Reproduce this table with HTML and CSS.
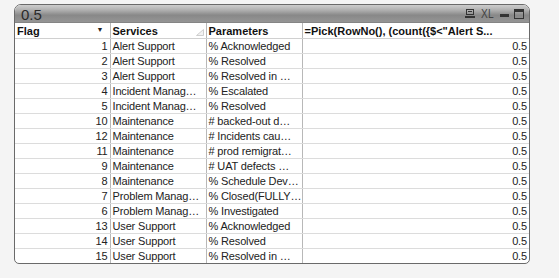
FILE: index.html
```html
<!DOCTYPE html>
<html>
<head>
<meta charset="utf-8">
<link rel="stylesheet" href="styles.css">
</head>
<body>
<div class="frame">
  <div class="titlebar">
    <span class="title">0.5</span>
    <div class="tools">
      <svg class="ico" width="10" height="9" viewBox="0 0 10 9"><rect x="1.5" y="0.5" width="7" height="5" fill="none" stroke="#333"/><rect x="3" y="2" width="4" height="1" fill="#333"/><rect x="0" y="7" width="10" height="2" fill="#333"/></svg>
      <span class="xl">XL</span>
      <svg class="ico" width="9" height="9" viewBox="0 0 9 9"><rect x="0" y="5" width="9" height="3" fill="#333"/></svg>
      <svg class="ico" width="10" height="10" viewBox="0 0 10 10"><rect x="0.5" y="0.5" width="9" height="9" fill="none" stroke="#333"/><rect x="0" y="0" width="10" height="3" fill="#333"/></svg>
    </div>
  </div>
  <table class="grid">
    <colgroup><col class="c1"><col class="c2"><col class="c3"><col class="c4"></colgroup>
    <thead>
      <tr>
        <th><span class="hd">Flag</span><span class="dd">▼</span></th>
        <th><span class="hd">Services</span><svg class="sort" width="8" height="7" viewBox="0 0 8 7"><path d="M0.5 6.5 L7.5 6.5 L7.5 0.5 Z" fill="#f2f2f2" stroke="#cfcfcf"/></svg></th>
        <th><span class="hd">Parameters</span></th>
        <th><span class="hd">=Pick(RowNo(), (count({$&lt;"Alert S...</span></th>
      </tr>
    </thead>
    <tbody>
      <tr><td class="num">1</td><td>Alert Support</td><td>% Acknowledged</td><td class="num">0.5</td></tr>
      <tr><td class="num">2</td><td>Alert Support</td><td>% Resolved</td><td class="num">0.5</td></tr>
      <tr><td class="num">3</td><td>Alert Support</td><td>% Resolved in …</td><td class="num">0.5</td></tr>
      <tr><td class="num">4</td><td>Incident Manag…</td><td>% Escalated</td><td class="num">0.5</td></tr>
      <tr><td class="num">5</td><td>Incident Manag…</td><td>% Resolved</td><td class="num">0.5</td></tr>
      <tr><td class="num">10</td><td>Maintenance</td><td># backed-out d…</td><td class="num">0.5</td></tr>
      <tr><td class="num">12</td><td>Maintenance</td><td># Incidents cau…</td><td class="num">0.5</td></tr>
      <tr><td class="num">11</td><td>Maintenance</td><td># prod remigrat…</td><td class="num">0.5</td></tr>
      <tr><td class="num">9</td><td>Maintenance</td><td># UAT defects …</td><td class="num">0.5</td></tr>
      <tr><td class="num">8</td><td>Maintenance</td><td>% Schedule Dev…</td><td class="num">0.5</td></tr>
      <tr><td class="num">7</td><td>Problem Manag…</td><td>% Closed(FULLY…</td><td class="num">0.5</td></tr>
      <tr><td class="num">6</td><td>Problem Manag…</td><td>% Investigated</td><td class="num">0.5</td></tr>
      <tr><td class="num">13</td><td>User Support</td><td>% Acknowledged</td><td class="num">0.5</td></tr>
      <tr><td class="num">14</td><td>User Support</td><td>% Resolved</td><td class="num">0.5</td></tr>
      <tr><td class="num">15</td><td>User Support</td><td>% Resolved in …</td><td class="num">0.5</td></tr>
    </tbody>
  </table>
</div>
</body>
</html>
```
FILE: styles.css
```css
html, body {
  margin: 0;
  padding: 0;
  background: #f4f4f4;
}
body {
  padding: 4px 0 0 14px;
  font-family: "Liberation Sans", "DejaVu Sans", sans-serif;
  font-size: 11px;
  color: #222;
}
.frame {
  width: 514px;
  border: 1px solid #6a6a6a;
  border-radius: 7px 7px 5px 5px;
  background: #fff;
  overflow: hidden;
}
.titlebar {
  height: 17px;
  display: flex;
  align-items: center;
  justify-content: space-between;
  padding: 0 5px 0 6px;
  background: linear-gradient(to bottom, #cdcdcd 0%, #b0b0b0 30%, #888888 60%, #959595 100%);
  border-bottom: 1px solid #858585;
}
.title {
  font-size: 15px;
  color: #2a2a2a;
  line-height: 17px;
  padding-top: 1px;
}
.tools {
  display: flex;
  align-items: center;
  gap: 5px;
}
.xl {
  font-size: 12px;
  color: #444;
  line-height: 12px;
  transform: scaleX(0.85);
}
.grid {
  width: 514px;
  border-collapse: collapse;
  table-layout: fixed;
}
.c1 { width: 95px; }
.c2 { width: 96px; }
.c3 { width: 96px; }
.c4 { width: 227px; }
th, td {
  height: 14px;
  padding: 0 1px 0 2px;
  line-height: 14px;
  white-space: nowrap;
  overflow: hidden;
  text-align: left;
  border-bottom: 1px solid #dcdcdc;
  border-left: 1px solid #b8b8b8;
}
td { letter-spacing: -0.15px; color: #222; }
th:first-child, td:first-child { border-left: none; }
th {
  height: 15px;
  font-weight: bold;
  color: #111;
  background: #fff;
  border-bottom: 1px solid #d0d0d0;
}
th .hd { vertical-align: middle; }
.dd {
  float: right;
  font-size: 7px;
  margin-right: 5px;
  color: #222;
}
.sort {
  float: right;
  margin-top: 6px;
  margin-right: 1px;
}
td.num { text-align: right; padding-right: 2px; }
tbody tr:last-child td { border-bottom: none; }
```
